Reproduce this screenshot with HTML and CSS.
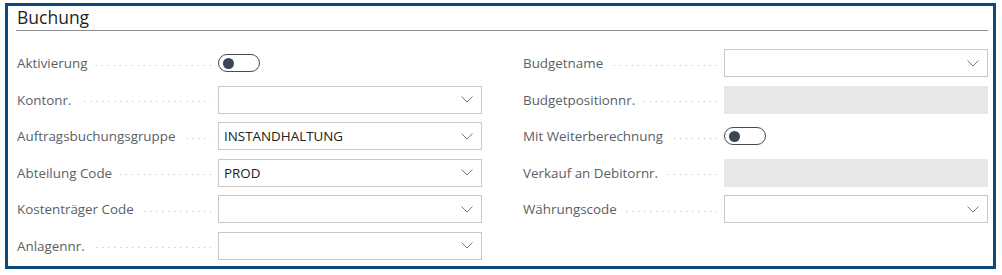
FILE: index.html
```html
<!DOCTYPE html>
<html>
<head>
  <meta charset="UTF-8">
  <title>Buchung</title>
  <link rel="stylesheet" href="styles.css">
</head>
<body>
  <section class="card">
    <h2 class="card-title">Buchung</h2>

    <div class="columns">
      <div class="column">
        <div class="field">
          <span class="caption">Aktivierung</span>
          <span class="toggle"><span class="knob"></span></span>
        </div>
        <div class="field">
          <span class="caption">Kontonr.</span>
          <div class="lookup">
            <span class="value"></span>
            <svg class="chevron" width="12" height="7" viewBox="0 0 12 7"><polyline points="0.5,0.5 6,6 11.5,0.5" fill="none" stroke="#7a7a7a" stroke-width="1"/></svg>
          </div>
        </div>
        <div class="field">
          <span class="caption">Auftragsbuchungsgruppe</span>
          <div class="lookup">
            <span class="value">INSTANDHALTUNG</span>
            <svg class="chevron" width="12" height="7" viewBox="0 0 12 7"><polyline points="0.5,0.5 6,6 11.5,0.5" fill="none" stroke="#7a7a7a" stroke-width="1"/></svg>
          </div>
        </div>
        <div class="field">
          <span class="caption">Abteilung Code</span>
          <div class="lookup">
            <span class="value">PROD</span>
            <svg class="chevron" width="12" height="7" viewBox="0 0 12 7"><polyline points="0.5,0.5 6,6 11.5,0.5" fill="none" stroke="#7a7a7a" stroke-width="1"/></svg>
          </div>
        </div>
        <div class="field">
          <span class="caption">Kostenträger Code</span>
          <div class="lookup">
            <span class="value"></span>
            <svg class="chevron" width="12" height="7" viewBox="0 0 12 7"><polyline points="0.5,0.5 6,6 11.5,0.5" fill="none" stroke="#7a7a7a" stroke-width="1"/></svg>
          </div>
        </div>
        <div class="field">
          <span class="caption">Anlagennr.</span>
          <div class="lookup">
            <span class="value"></span>
            <svg class="chevron" width="12" height="7" viewBox="0 0 12 7"><polyline points="0.5,0.5 6,6 11.5,0.5" fill="none" stroke="#7a7a7a" stroke-width="1"/></svg>
          </div>
        </div>
      </div>

      <div class="column">
        <div class="field">
          <span class="caption">Budgetname</span>
          <div class="lookup">
            <span class="value"></span>
            <svg class="chevron" width="12" height="7" viewBox="0 0 12 7"><polyline points="0.5,0.5 6,6 11.5,0.5" fill="none" stroke="#7a7a7a" stroke-width="1"/></svg>
          </div>
        </div>
        <div class="field">
          <span class="caption">Budgetpositionnr.</span>
          <div class="lookup disabled"></div>
        </div>
        <div class="field">
          <span class="caption">Mit Weiterberechnung</span>
          <span class="toggle"><span class="knob"></span></span>
        </div>
        <div class="field">
          <span class="caption">Verkauf an Debitornr.</span>
          <div class="lookup disabled"></div>
        </div>
        <div class="field">
          <span class="caption">Währungscode</span>
          <div class="lookup">
            <span class="value"></span>
            <svg class="chevron" width="12" height="7" viewBox="0 0 12 7"><polyline points="0.5,0.5 6,6 11.5,0.5" fill="none" stroke="#7a7a7a" stroke-width="1"/></svg>
          </div>
        </div>
      </div>
    </div>
  </section>
</body>
</html>
```

FILE: styles.css
```css
:root {
  --frame: #0b4a7e;
  --label: #5a5f66;
  --text: #212121;
  --border: #c8c8c8;
  --disabled: #e6e7e8;
  --dots: #b8b8b8;
}

body {
  margin: 0;
  padding: 3px 6px 0 5px;
  background: #fff;
  font-family: "Open Sans", "Noto Sans", sans-serif;
  color: var(--text);
}

.card {
  height: 266px;
  box-sizing: border-box;
  border: 3px solid var(--frame);
  padding: 0 5px 0 8px;
  background: #fff;
}

.card-title {
  margin: 0;
  padding: 1px 0 2px 1px;
  font-size: 17.5px;
  font-weight: 400;
  line-height: 21px;
  color: #1f1f1f;
  border-bottom: 1px solid #8c8c8c;
}

.columns {
  display: grid;
  grid-template-columns: 466px 466px;
  column-gap: 40px;
  margin-top: 18px;
}

.column {
  display: flex;
  flex-direction: column;
  gap: 8.6px;
}

.field {
  display: flex;
  align-items: center;
  height: 28px;
}

.caption {
  flex: 1;
  display: flex;
  align-items: center;
  font-size: 13.4px;
  color: var(--label);
  padding-left: 1px;
  margin-right: 7px;
  white-space: nowrap;
}

.caption::after {
  content: "";
  flex: 1;
  height: 1px;
  margin: 4px 0 0 8px;
  background-image: linear-gradient(to left, var(--dots) 1px, transparent 1px);
  background-size: 6px 1px;
  background-position: right center;
}

.lookup {
  width: 264px;
  height: 28px;
  box-sizing: border-box;
  border: 1px solid var(--border);
  display: flex;
  align-items: center;
  padding: 0 8px 0 5px;
}

.lookup.disabled {
  border: none;
  background: var(--disabled);
}

.value {
  flex: 1;
  font-size: 13.4px;
  color: var(--text);
}

.chevron {
  display: block;
}

.toggle {
  width: 42px;
  height: 18px;
  box-sizing: border-box;
  border: 1.5px solid #4a4a4a;
  border-radius: 10px;
  display: flex;
  align-items: center;
  padding-left: 4px;
  margin-right: 222px;
}

.knob {
  width: 11px;
  height: 11px;
  border-radius: 50%;
  background: #3b4657;
}
```
